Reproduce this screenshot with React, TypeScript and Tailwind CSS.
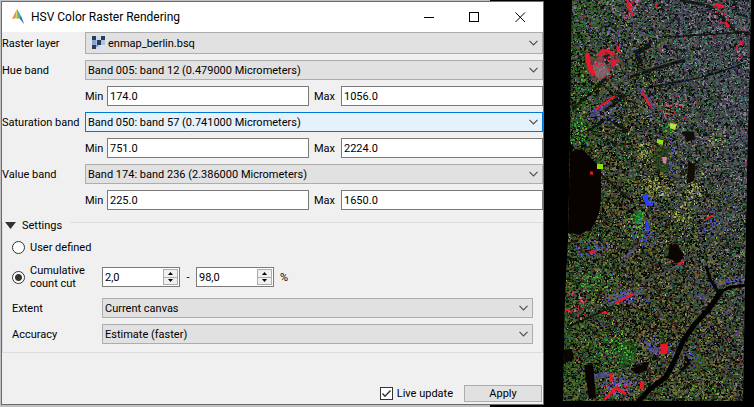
import type { ReactNode } from "react";

const RANDOM_SEED = 90210;

function makeRandom(seed: number) {
  let s = seed;
  return () => {
    s = (s + 0x6d2b79f5) | 0;
    let t = Math.imul(s ^ (s >>> 15), 1 | s);
    t = (t + Math.imul(t ^ (t >>> 7), 61 | t)) ^ t;
    return ((t ^ (t >>> 14)) >>> 0) / 4294967296;
  };
}

const URBAN = ["#3c3c44", "#4c4c58", "#62626e", "#26282c", "#443e50", "#30503e", "#82828a", "#101416", "#584468", "#3c6450", "#20262a"];
const GREEN = ["#16280e", "#204414", "#2e5a1e", "#0a1206", "#30603c", "#4a5c24", "#143c10", "#5c6c34", "#245446", "#0a0e06"];
const MIXED = ["#1e2014", "#403c20", "#5c5a30", "#0a0a08", "#2c5228", "#78723c", "#384444", "#1c3a1c", "#4a4a54", "#301e14", "#10100a"];
const BRIGHT = ["#e01830", "#20c040", "#3040e0", "#c8c860", "#30b0b0", "#a040c0", "#b8e040", "#d0d0d8", "#208850", "#405890"];

const WARM = ["#ee1528", "#c83050", "#9a4060", "#d870b0"];
const COOL = ["#5950a5", "#3a48e0", "#8060c0", "#606080"];
const FIELDS = ["#a8a850", "#c8c868", "#70883c", "#585c28"];
const LUSH = ["#20b040", "#1c6a20", "#70d030", "#2c5a20"];

/* x, y, horizontal spread, vertical spread, count, colours */
const CLUSTERS: [number, number, number, number, number, string[]][] = [
  [86, 8, 8, 18, 50, WARM],
  [175, 12, 16, 22, 60, WARM],
  [195, 45, 8, 20, 26, WARM],
  [60, 62, 18, 18, 90, WARM],
  [70, 30, 40, 24, 60, COOL],
  [38, 90, 14, 34, 90, LUSH],
  [62, 112, 22, 14, 60, COOL],
  [128, 106, 16, 14, 34, WARM],
  [122, 128, 10, 8, 30, LUSH],
  [35, 130, 14, 14, 60, LUSH],
  [110, 186, 18, 12, 110, FIELDS],
  [148, 186, 12, 22, 90, FIELDS],
  [100, 152, 8, 14, 60, FIELDS],
  [136, 215, 14, 16, 60, FIELDS],
  [104, 202, 10, 8, 40, COOL],
  [90, 225, 14, 18, 60, LUSH],
  [50, 248, 22, 10, 80, COOL],
  [100, 236, 16, 14, 70, COOL],
  [170, 222, 18, 16, 60, COOL],
  [126, 160, 5, 26, 50, COOL],
  [50, 282, 28, 16, 90, LUSH],
  [80, 296, 26, 8, 80, COOL],
  [32, 302, 12, 20, 60, WARM],
  [108, 344, 14, 12, 50, COOL],
  [72, 352, 34, 26, 160, LUSH],
  [76, 384, 24, 14, 130, COOL],
  [74, 386, 22, 14, 80, WARM],
  [136, 352, 22, 18, 50, COOL],
  [180, 282, 22, 10, 60, COOL],
  [150, 390, 40, 12, 60, LUSH],
  [172, 138, 16, 14, 40, FIELDS],
];

function buildSpeckles() {
  const random = makeRandom(RANDOM_SEED);
  const ground = new Map<string, string[]>();
  const accents = new Map<string, string[]>();
  const put = (layer: Map<string, string[]>, color: string, x: number, y: number, w: number, h: number) => {
    const list = layer.get(color) ?? [];
    list.push(`M${x} ${y}h${w}v${h}h-${w}z`);
    layer.set(color, list);
  };
  const pick = (colors: string[]) => colors[Math.floor(random() * colors.length)];
  for (let y = 0; y < 402; y += 1) {
    let x = 18;
    while (x < 208) {
      const w = random() < 0.4 ? 1 : 2;
      const urban = (x - 60) / 120 + (170 - y) / 260;
      const green = (80 - x) / 90 + Math.abs(y - 190) / 380;
      const r = random();
      const pool = r < urban * 0.75 ? URBAN : r > 1 - Math.max(0.16, green * 0.8) ? GREEN : MIXED;
      put(ground, pick(pool), x, y, w, random() < 0.4 ? 1 : 2);
      x += w;
    }
  }
  for (let i = 0; i < 900; i += 1) {
    put(accents, pick(BRIGHT), 20 + Math.floor(random() * 187), Math.floor(random() * 401), 1, random() < 0.3 ? 2 : 1);
  }
  for (const [cx, cy, rx, ry, count, colors] of CLUSTERS) {
    for (let i = 0; i < count; i += 1) {
      const dx = random() + random() - 1;
      const dy = random() + random() - 1;
      put(accents, pick(colors), Math.round(cx + dx * rx), Math.round(cy + dy * ry), random() < 0.5 ? 1 : 2, random() < 0.6 ? 1 : 2);
    }
  }
  return { ground: [...ground.entries()], accents: [...accents.entries()] };
}

const SPECKLES = buildSpeckles();

function SatelliteMap() {
  return (
    <svg className="h-[407px] w-[210px] shrink-0 bg-black" viewBox="0 0 210 407" role="img" aria-label="Raster map canvas">
      <defs>
        <clipPath id="scene">
          <path d="M28 0H207L205 90L203 170L201 280L199 401H19L21 300L24 240L26 140L27 60Z" />
        </clipPath>
      </defs>
      <g clipPath="url(#scene)">
        <rect width="210" height="402" fill="#1c2218" />
        <g shapeRendering="crispEdges">
          {SPECKLES.ground.map(([color, parts]) => (
            <path key={color} d={parts.join("")} fill={color} />
          ))}
        </g>
        {/* rail lines and roads */}
        <g fill="none" stroke="#50545c" strokeWidth="1.500" opacity=".65">
          <path d="M83 0L90 24L87 52L82 78L97 105L128 136" />
          <path d="M26 124L60 92L84 76L140 58" />
          <path d="M138 0V36M135 130V200L150 206L180 216M135 145L165 163H203" />
          <path d="M45 311L85 290L135 265L168 238L196 205" />
          <path d="M133 345L150 372M150 371L196 332" />
          <path d="M98 290L120 318M152 250V300" />
        </g>
        <g fill="none" stroke="#0b0e0b" strokeWidth="2" opacity=".8">
          <path d="M28 110L62 78M84 78L104 71L140 60" strokeWidth="3" />
          <path d="M102 88L160 77L202 63M126 37L204 32" strokeWidth="1.500" />
          <path d="M43 131L64 118L84 132" strokeWidth="3" />
          <path d="M60 110L80 95" strokeWidth="5" />
          <path d="M97 64L93 52L106 45" strokeWidth="5" />
          <path d="M52 170L90 203M26 326L70 306" />
          <path d="M136 0L165 6L180 19L192 32L206 34" strokeWidth="3" />
          <path d="M190 0L193 14L204 17" />
        </g>
        {/* parks */}
        <g opacity=".55">
          <path d="M114 145L126 147L127 172L111 171L110 152Z" fill="#214310" />
          <path d="M73 342L91 341L92 361L78 368Z" fill="#1c5810" />
          <path d="M150 356L162 355L156 372L148 368Z" fill="#2a6018" />
          <path d="M92 211L101 212L97 224L91 223Z" fill="#12b848" />
        </g>
        <path d="M42 52L50 58L63 49L73 54L77 61L69 68L61 78L50 83L43 70Z" fill="#7b4650" opacity=".6" />
        <path d="M50 62L61 63L66 73L55 80L48 71Z" fill="#8f8488" opacity=".55" />
        <path d="M59 56L65 54L68 61L62 65Z" fill="#10241c" />
        <g shapeRendering="crispEdges">
          {SPECKLES.accents.map(([color, parts]) => (
            <path key={color} d={parts.join("")} fill={color} opacity=".8" />
          ))}
        </g>
        <g fill="none" stroke="#5950a5" opacity=".65">
          <path d="M46 116L68 102M94 88L111 108" strokeWidth="3" />
          <path d="M65 304L98 291M80 258L92 248" strokeWidth="3" />
          <path d="M105 350H116M48 377L66 374" strokeWidth="5" />
          <path d="M154 295L163 300" strokeWidth="4" />
        </g>
        {/* lakes and forest */}
        <path d="M26 152L38 149L47 158L57 169L57 200L55 214L48 228L35 235L23 232Z" fill="#080301" />
        <path d="M23 140L30 147L25 160L20 160ZM40 365L49 364L52 398L45 399Z" fill="#080301" />
        <path d="M19 350L28 349L30 359L19 364ZM87 369L106 361L102 371L92 374ZM125 247L132 243L140 255L135 264L124 258Z" fill="#0b0502" />
        <path d="M140 131L150 132L151 139L142 142ZM144 160L151 165L150 181L143 184Z" fill="#100e06" />
        {/* canal */}
        <path d="M204 285L187 287L176 292" fill="none" stroke="#020202" strokeWidth="3" />
        <path d="M178 290L165 309L150 325L139 341L130 362L122 377L106 389L94 402" fill="none" stroke="#020202" strokeWidth="5" />
        <path d="M174 292L166 279L162 266M141 356L145 363L138 370" fill="none" stroke="#070707" strokeWidth="3" />
        <path d="M53 164H59V169H53ZM113 139L119 140V145L113 143Z" fill="#90e018" />
        <path d="M126 123L133 124L131 130L126 128Z" fill="#b8e040" />
        <g fill="none" stroke="#ee1528" strokeWidth="3">
          <path d="M43 53L45 67L50 75" strokeWidth="4" />
          <path d="M55 56L58 51L64 51L70 55" />
          <path d="M74 46V52M68 66L72 60" />
          <path d="M51 110L71 96M98 92L107 107M83 0L89 16" strokeWidth="2" />
          <path d="M171 4L180 7M181 22L185 27M195 43H199" />
          <path d="M72 303L89 294M134 264L140 261" strokeWidth="2" />
          <path d="M120 344V354" strokeWidth="7" />
          <path d="M67 373V382M98 381L97 389" />
          <path d="M61 399L72 388L82 394M46 173H49M46 252H51" />
          <path d="M162 219L169 215M21 310H26M58 313H63M112 4V8" strokeWidth="2" />
        </g>
        <path d="M98 196L103 194L105 203L109 202L109 206L102 205ZM101 221L104 220L105 230L102 230Z" fill="#263fff" />
        <path d="M118 157L123 157L122 164L119 163Z" fill="#de79ac" />
      </g>
    </svg>
  );
}

function Chevron() {
  return (
    <svg className="pointer-events-none absolute top-1/2 right-[5px] h-[6px] w-[9px] -translate-y-1/2" viewBox="0 0 9 6" fill="none" stroke="#505050" strokeWidth="1.2" aria-hidden="true">
      <path d="M.5 .8L4.5 4.8L8.500 .8" />
    </svg>
  );
}

function RasterIcon() {
  return (
    <svg className="pointer-events-none absolute top-[4px] left-[7px] h-[13px] w-[13px]" viewBox="0 0 13 13" shapeRendering="crispEdges" aria-hidden="true">
      <rect width="13" height="13" fill="#a9c3e3" />
      <path d="M0 0H4V4H0ZM9 0H13V4H9ZM5 4H9V9H5ZM0 9H4V13H0Z" fill="#2d3c50" />
      <path d="M4 0H9V4H4ZM4 9H9V13H4Z" fill="#cbdcf0" />
      <path d="M0 4H4V9H0ZM4 9H6V11H4Z" fill="#88a6cd" />
      <path d="M9 9H13V13H9Z" fill="#e0e6ee" />
    </svg>
  );
}

type ComboProps = { id: string; value: string; focused?: boolean; icon?: ReactNode };

function Combo({ id, value, focused, icon }: ComboProps) {
  const tone = focused ? "border-[#0078d7] bg-[#e5f1fb]" : "border-[#adadad] bg-[#e1e1e1]";
  const size = icon ? "h-[22px] pl-[22px]" : "h-[20px] pl-[2px]";
  return (
    <div className="relative min-w-0 flex-1">
      <select id={id} className={`block w-full appearance-none border pr-5 outline-none ${tone} ${size}`}>
        <option>{value}</option>
      </select>
      {icon}
      <Chevron />
    </div>
  );
}

const FIELD = "h-[20px] w-full min-w-0 flex-1 border border-[#7a7a7a] bg-white px-[2px] outline-none";

function RangeRow({ name, min, max }: { name: string; min: string; max: string }) {
  return (
    <div className="col-start-2 flex items-center">
      <label htmlFor={`${name}-min`} className="w-[22px] shrink-0">Min</label>
      <input id={`${name}-min`} defaultValue={min} className={FIELD} />
      <label htmlFor={`${name}-max`} className="ml-[5px] w-[27px] shrink-0">Max</label>
      <input id={`${name}-max`} defaultValue={max} className={FIELD} />
    </div>
  );
}

function BandRow({ name, label, value, focused }: { name: string; label: string; value: string; focused?: boolean }) {
  return (
    <>
      <label htmlFor={name} className="whitespace-nowrap">{label}</label>
      <Combo id={name} value={value} focused={focused} />
    </>
  );
}

function SpinBox({ label, value }: { label: string; value: string }) {
  return (
    <div className="flex h-[20px] w-[78px] border border-[#7a7a7a] bg-white p-px">
      <input aria-label={label} defaultValue={value} className="min-w-0 flex-1 bg-transparent pl-px outline-none" />
      <div className="flex w-[15px] flex-col">
        <button type="button" aria-label={`Increase ${label}`} className="flex flex-1 items-center justify-center border border-[#adadad] bg-[#f0f0f0]">
          <svg className="h-[3px] w-[5px]" viewBox="0 0 5 3"><path d="M0 3L2.500 0L5 3Z" /></svg>
        </button>
        <button type="button" aria-label={`Decrease ${label}`} className="flex flex-1 items-center justify-center border border-t-0 border-[#adadad] bg-[#f0f0f0]">
          <svg className="h-[3px] w-[5px]" viewBox="0 0 5 3"><path d="M0 0L2.500 3L5 0Z" /></svg>
        </button>
      </div>
    </div>
  );
}

const RADIO =
  "size-[13px] shrink-0 appearance-none rounded-full border border-[#333] bg-white checked:bg-[radial-gradient(circle,#333_3px,white_4px)]";

function TitleBar() {
  return (
    <header className="flex h-[30px] items-center bg-white pl-[10px]">
      <svg className="h-[16px] w-[13px]" viewBox="0 0 13 16" aria-hidden="true">
        <path d="M5 0L0 10L4 9Z" fill="#f08a48" />
        <path d="M5 0L3 10L6 9Z" fill="#e8cf42" />
        <path d="M5 0L5 10L8 9Z" fill="#80c764" />
        <path d="M5 0L7 9L12 15L8 5Z" fill="#3aa6cf" />
        <path d="M8 9L12 15L9 7Z" fill="#2f62b0" />
      </svg>
      <h1 className="ml-[6px] flex-1 font-['Roboto','Open_Sans',sans-serif] text-[12px] leading-[16px] text-black">HSV Color Raster Rendering</h1>
      <div className="flex items-center gap-[35px] pr-[17px]">
        <button type="button" aria-label="Minimize">
          <svg className="size-[11px]" viewBox="0 0 11 11" shapeRendering="crispEdges"><path d="M.5 5.500H10.500" stroke="#000" /></svg>
        </button>
        <button type="button" aria-label="Maximize">
          <svg className="size-[11px]" viewBox="0 0 11 11" fill="none" shapeRendering="crispEdges"><path d="M.5 .5H9.500V9.500H.5Z" stroke="#000" /></svg>
        </button>
        <button type="button" aria-label="Close">
          <svg className="size-[11px]" viewBox="0 0 11 11"><path d="M.5 .5L10 10M10 .5L.5 10" stroke="#000" /></svg>
        </button>
      </div>
    </header>
  );
}

export default function App() {
  return (
    <div className="flex items-start bg-black font-['Roboto','Open_Sans',sans-serif] text-[11px] leading-[13px] text-black">
      <div className="min-w-0 flex-1 bg-[linear-gradient(to_right,#c0c0c0_90%,#000_90%)] pt-px pb-[2px] pl-px">
        <form className="border border-[#6b6b6b] bg-[#f0f0f0]" onSubmit={(e) => e.preventDefault()}>
          <TitleBar />
          <div className="grid grid-cols-[83px_1fr] items-center gap-y-[6px]">
            <label htmlFor="layer">Raster layer</label>
            <Combo id="layer" value="enmap_berlin.bsq" icon={<RasterIcon />} />
            <BandRow name="hue" label="Hue band" value="Band 005: band 12 (0.479000 Micrometers)" />
            <RangeRow name="hue" min="174.0" max="1056.0" />
            <BandRow name="saturation" label="Saturation band" value="Band 050: band 57 (0.741000 Micrometers)" focused />
            <RangeRow name="saturation" min="751.0" max="2224.0" />
            <BandRow name="value" label="Value band" value="Band 174: band 236 (2.386000 Micrometers)" />
            <RangeRow name="value" min="225.0" max="1650.0" />
          </div>

          <fieldset className="mt-[4px] border border-[#dcdcdc] pb-[8px]">
            <legend className="h-[16px] pr-2">
              <button type="button" aria-expanded="true" className="flex items-center gap-[6px] pt-[5px] pl-[2px]">
                <svg className="h-[7px] w-[11px]" viewBox="0 0 11 7" aria-hidden="true"><path d="M0 0H11L5.500 7Z" fill="#333" /></svg>
                Settings
              </button>
            </legend>
            <div className="px-[9px] pt-[11px]">
              <label className="flex items-center gap-[5px]">
                <input type="radio" name="mode" className={RADIO} />
                User defined
              </label>
              <div className="mt-[10px] flex items-center">
                <label className="flex w-[90px] items-center gap-[5px]">
                  <input type="radio" name="mode" defaultChecked className={RADIO} />
                  <span>Cumulative<br />count cut</span>
                </label>
                <SpinBox label="Lower percentile" value="2,0" />
                <span className="w-[16px] text-center">-</span>
                <SpinBox label="Upper percentile" value="98,0" />
                <span className="ml-[6px]">%</span>
              </div>
              <div className="mt-[8px] grid grid-cols-[90px_1fr] items-center gap-y-[6px]">
                <label htmlFor="extent">Extent</label>
                <Combo id="extent" value="Current canvas" />
                <label htmlFor="accuracy">Accuracy</label>
                <Combo id="accuracy" value="Estimate (faster)" />
              </div>
            </div>
          </fieldset>

          <footer className="flex items-center justify-end gap-[11px] pt-[32px] pr-px pb-[2px]">
            <label className="flex items-center gap-[4px]">
              <span className="relative size-[13px]">
                <input type="checkbox" defaultChecked className="block size-[13px] appearance-none border border-[#333] bg-white" />
                <svg className="pointer-events-none absolute inset-0" viewBox="0 0 13 13" fill="none" stroke="#333" strokeWidth="1.400" aria-hidden="true"><path d="M2.500 6.500L5 9.300L10.500 3.500" /></svg>
              </span>
              Live update
            </label>
            <button type="submit" className="h-[17px] w-[78px] border border-[#adadad] bg-[#e1e1e1]">Apply</button>
          </footer>
        </form>
      </div>
      <SatelliteMap />
    </div>
  );
}
